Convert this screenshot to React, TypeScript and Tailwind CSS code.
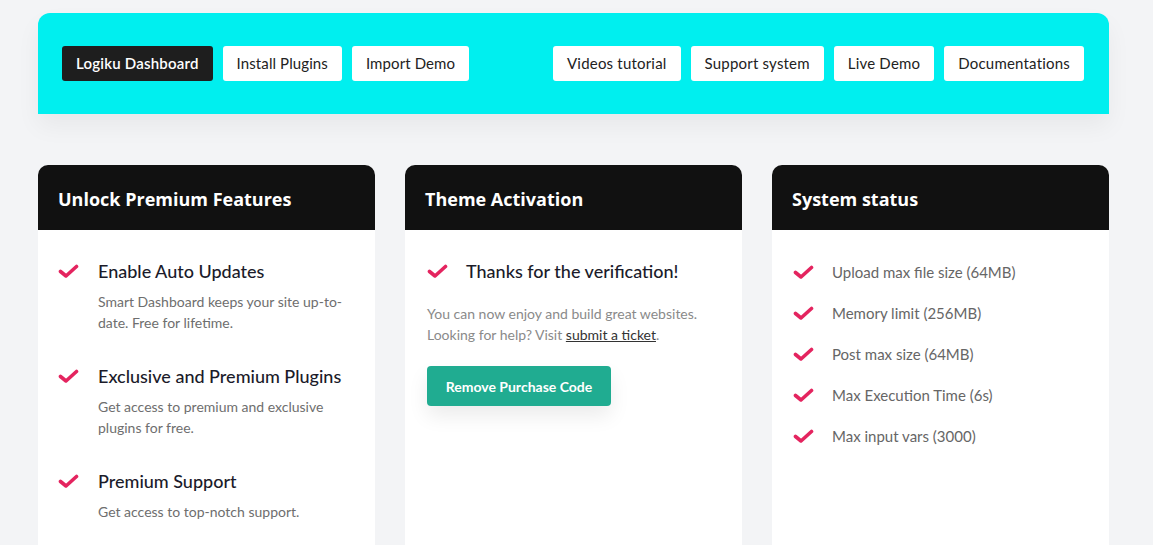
import React from "react";

const Check: React.FC = () => (
  <svg width="21" height="15" viewBox="0 0 21 15" className="shrink-0">
    <path
      d="M2.5 7.5 L8 12 L18.5 2.5"
      fill="none"
      stroke="#e4245f"
      strokeWidth="3.6"
      strokeLinecap="round"
      strokeLinejoin="round"
    />
  </svg>
);

const navLeft = ["Install Plugins", "Import Demo"];
const navRight = ["Videos tutorial", "Support system", "Live Demo", "Documentations"];

const features = [
  { title: "Enable Auto Updates", desc: "Smart Dashboard keeps your site up-to-date. Free for lifetime." },
  { title: "Exclusive and Premium Plugins", desc: "Get access to premium and exclusive plugins for free." },
  { title: "Premium Support", desc: "Get access to top-notch support." },
];

const status = [
  "Upload max file size (64MB)",
  "Memory limit (256MB)",
  "Post max size (64MB)",
  "Max Execution Time (6s)",
  "Max input vars (3000)",
];

const CardHeader: React.FC<{ title: string }> = ({ title }) => (
  <div className="bg-[#111111] rounded-t-[10px] h-[65px] flex items-center px-5 pt-[4px]">
    <h2 className="text-white text-[18px] font-bold font-['Open_Sans',sans-serif]">{title}</h2>
  </div>
);

export default function App() {
  const font = "font-['Lato',sans-serif]";
  return (
    <div className={`min-h-[545px] bg-[#f3f4f6] pt-[13px] ${font}`}>
      <div className="ml-[38px] w-[1071px]">
        <div className="bg-[#00efef] rounded-t-[12px] h-[101px] pl-6 pr-[25px] flex items-center justify-between shadow-[0_12px_24px_rgba(0,0,0,0.05)]">
          <div className="flex gap-[10px]">
            <button className="h-[35px] px-[14px] rounded-[3px] bg-[#1e1e1e] text-white text-[15px] font-semibold tracking-[0.2px]">
              Logiku Dashboard
            </button>
            {navLeft.map((n) => (
              <button
                key={n}
                className="h-[35px] px-[14px] rounded-[3px] bg-white text-[#222] text-[15px] tracking-[0.1px]"
              >
                {n}
              </button>
            ))}
          </div>
          <div className="flex gap-[10px]">
            {navRight.map((n) => (
              <button
                key={n}
                className="h-[35px] px-[14px] rounded-[3px] bg-white text-[#222] text-[15px] tracking-[0.2px]"
              >
                {n}
              </button>
            ))}
          </div>
        </div>

        <div className="grid grid-cols-3 gap-[30px] mt-[51px]">
          <div className="bg-white rounded-t-[10px] h-[400px]">
            <CardHeader title="Unlock Premium Features" />
            <div className="pl-5 pr-4 pt-[29px] flex flex-col gap-[31px]">
              {features.map((f) => (
                <div key={f.title} className="flex gap-[19px]">
                  <div className="pt-[5px]">
                    <Check />
                  </div>
                  <div>
                    <h3 className="text-[18px] font-medium text-[#1b1b2a] leading-[24px]">{f.title}</h3>
                    <p className="mt-[8px] text-[14px] leading-[21px] text-[#6e6e6e]">{f.desc}</p>
                  </div>
                </div>
              ))}
            </div>
          </div>

          <div className="bg-white rounded-t-[10px] h-[400px]">
            <CardHeader title="Theme Activation" />
            <div className="px-[22px] pt-[29px]">
              <div className="flex items-center gap-[18px]">
                <Check />
                <h3 className="text-[18px] font-medium text-[#1b1b2a] leading-[24px]">
                  Thanks for the verification!
                </h3>
              </div>
              <p className="mt-[20px] text-[14px] leading-[21px] text-[#8a8a8a]">
                You can now enjoy and build great websites. Looking for help? Visit{" "}
                <a href="#" className="underline text-[#333]">
                  submit a ticket
                </a>
                .
              </p>
              <button className="mt-[21px] h-[40px] w-[184px] rounded-[4px] bg-[#20ac91] text-white text-[14px] font-bold shadow-[0_10px_20px_rgba(0,0,0,0.08)]">
                Remove Purchase Code
              </button>
            </div>
          </div>

          <div className="bg-white rounded-t-[10px] h-[400px]">
            <CardHeader title="System status" />
            <div className="pl-[21px] pt-[32px] flex flex-col gap-[20px]">
              {status.map((s) => (
                <div key={s} className="flex items-center gap-[18px]">
                  <Check />
                  <span className="text-[15px] leading-[21px] text-[#666]">{s}</span>
                </div>
              ))}
            </div>
          </div>
        </div>
      </div>
    </div>
  );
}
